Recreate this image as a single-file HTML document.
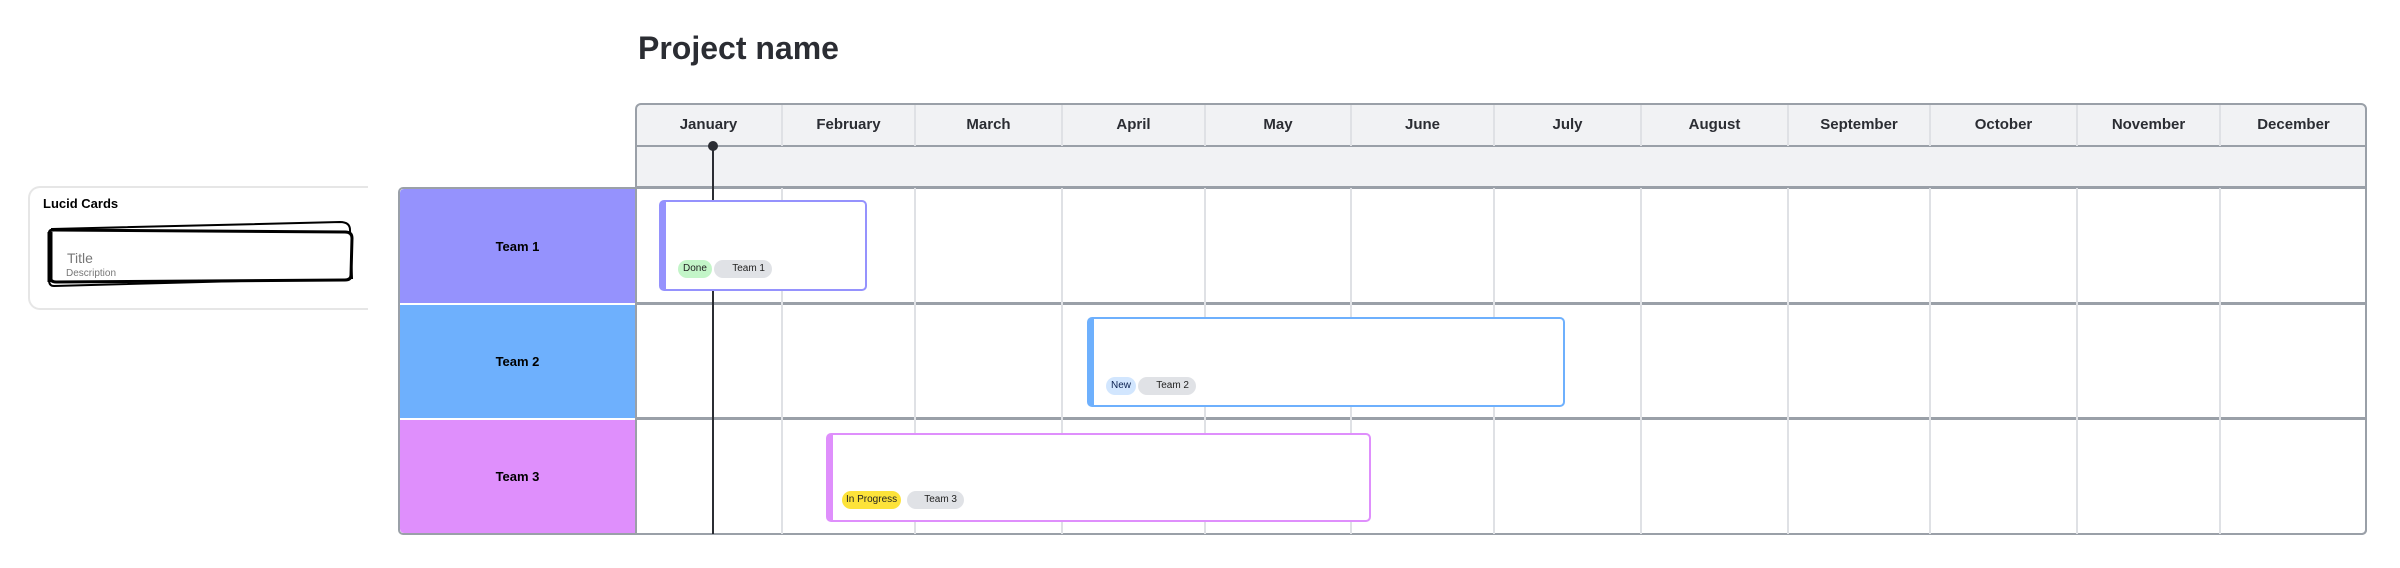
<!DOCTYPE html>
<html><head><meta charset="utf-8"><style>
*{box-sizing:border-box;margin:0;padding:0}
body{width:2400px;height:568px;background:#fff;position:relative;overflow:hidden;font-family:"Liberation Sans",sans-serif}
.a{position:absolute}
.mon{position:absolute;top:103px;height:43px;display:flex;align-items:center;justify-content:center;font-weight:bold;font-size:15px;color:#2b2d33}
.vl{position:absolute;width:2px;background:#dfe1e5;top:146px;height:388px}
.hl{position:absolute;left:635px;width:1732px;height:3px;background:#9aa0a8}
.team{position:absolute;left:398px;width:237px;display:flex;align-items:center;justify-content:center;font-weight:bold;font-size:13px;color:#000}
.card{position:absolute;background:#fff;border:2px solid;border-left-width:7px;border-radius:5px}
.pill{position:absolute;height:18px;border-radius:9px;font-size:10px;line-height:18px;color:#222;padding:0 7px}
</style></head><body>
<div class="a" style="left:638px;top:30px;font-size:32px;font-weight:bold;color:#2b2d33">Project name</div>

<!-- Lucid panel -->
<div class="a" style="left:28px;top:186px;width:340px;height:124px;border:2px solid #e6e6e6;border-right:none;border-radius:12px 0 0 12px;background:#fff"></div>
<div class="a" style="left:43px;top:196px;font-size:13px;font-weight:bold;color:#000">Lucid Cards</div>
<svg class="a" style="left:40px;top:220px" width="320" height="80" viewBox="0 0 320 80">
<path d="M12 9 L300 2 Q310 2 310 10 L312 58 L14 66 Q9 66 9 60 Z" fill="none" stroke="#000" stroke-width="2"/>
<path d="M10 14 Q8 10 14 10 L305 12 Q312 12 312 18 L311 55 Q311 60 305 60 L16 62 Q10 62 10 56 Z" fill="#fff" stroke="#000" stroke-width="3"/>
<path d="M10 12 L10 62" stroke="#000" stroke-width="5"/>
</svg>
<div class="a" style="left:67px;top:250px;font-size:14px;color:#777">Title</div>
<div class="a" style="left:66px;top:268px;font-size:10px;color:#777">Description</div>

<!-- grid -->
<div class="a" style="left:635px;top:103px;width:1732px;height:84px;background:#f1f2f4;border-radius:6px 6px 0 0"></div>
<div class="a" style="left:398px;top:187px;width:1969px;height:348px;border:2px solid #9aa0a8;border-radius:5px 0 5px 5px"></div>
<div class="a" style="left:635px;top:103px;width:1732px;height:432px;border:2px solid #9aa0a8;border-radius:6px 6px 5px 0"></div>
<div class="team" style="top:189px;height:114px;background:#9592fd;border-radius:4px 0 0 0;left:400px;width:235px">Team 1</div>
<div class="team" style="top:305px;height:113px;background:#6eb0fd;left:400px;width:235px">Team 2</div>
<div class="team" style="top:420px;height:113px;background:#df8ffc;border-radius:0 0 0 4px;left:400px;width:235px">Team 3</div>
<div class="a" style="left:635px;top:145px;width:1732px;height:2px;background:#9aa0a8"></div>
<div class="a" style="left:635px;top:186px;width:1732px;height:2px;background:#9aa0a8"></div>
<div class="hl" style="top:302px"></div>
<div class="hl" style="top:417px"></div>
<div class="a" style="left:635px;top:187px;width:2px;height:348px;background:#9aa0a8"></div>

<div class="vl" style="left:781px;top:105px;height:41px"></div><div class="vl" style="left:781px;top:188px;height:346px"></div>
<div class="vl" style="left:914px;top:105px;height:41px"></div><div class="vl" style="left:914px;top:188px;height:346px"></div>
<div class="vl" style="left:1061px;top:105px;height:41px"></div><div class="vl" style="left:1061px;top:188px;height:346px"></div>
<div class="vl" style="left:1204px;top:105px;height:41px"></div><div class="vl" style="left:1204px;top:188px;height:346px"></div>
<div class="vl" style="left:1350px;top:105px;height:41px"></div><div class="vl" style="left:1350px;top:188px;height:346px"></div>
<div class="vl" style="left:1493px;top:105px;height:41px"></div><div class="vl" style="left:1493px;top:188px;height:346px"></div>
<div class="vl" style="left:1640px;top:105px;height:41px"></div><div class="vl" style="left:1640px;top:188px;height:346px"></div>
<div class="vl" style="left:1787px;top:105px;height:41px"></div><div class="vl" style="left:1787px;top:188px;height:346px"></div>
<div class="vl" style="left:1929px;top:105px;height:41px"></div><div class="vl" style="left:1929px;top:188px;height:346px"></div>
<div class="vl" style="left:2076px;top:105px;height:41px"></div><div class="vl" style="left:2076px;top:188px;height:346px"></div>
<div class="vl" style="left:2219px;top:105px;height:41px"></div><div class="vl" style="left:2219px;top:188px;height:346px"></div>

<div class="mon" style="left:635px;width:147px">January</div>
<div class="mon" style="left:782px;width:133px">February</div>
<div class="mon" style="left:915px;width:147px">March</div>
<div class="mon" style="left:1062px;width:143px">April</div>
<div class="mon" style="left:1205px;width:146px">May</div>
<div class="mon" style="left:1351px;width:143px">June</div>
<div class="mon" style="left:1494px;width:147px">July</div>
<div class="mon" style="left:1641px;width:147px">August</div>
<div class="mon" style="left:1788px;width:142px">September</div>
<div class="mon" style="left:1930px;width:147px">October</div>
<div class="mon" style="left:2077px;width:143px">November</div>
<div class="mon" style="left:2220px;width:147px">December</div>

<!-- timeline -->
<div class="a" style="left:712px;top:146px;width:2px;height:388px;background:#2b2d33"></div>
<div class="a" style="left:708px;top:141px;width:10px;height:10px;border-radius:50%;background:#2b2d33"></div>

<!-- cards -->
<div class="card" style="left:659px;top:200px;width:208px;height:91px;border-color:#9592fd"></div>
<div class="pill" style="left:678px;top:260px;background:#c3f5c8;padding:0 5px">Done</div>
<div class="pill" style="left:714px;top:260px;width:58px;background:#e0e2e6;text-align:right">Team 1</div>

<div class="card" style="left:1087px;top:317px;width:478px;height:90px;border-color:#6eb0fd"></div>
<div class="pill" style="left:1106px;top:377px;background:#d2e6fe;color:#0a2050;padding:0 5px">New</div>
<div class="pill" style="left:1138px;top:377px;width:58px;background:#e0e2e6;text-align:right">Team 2</div>

<div class="card" style="left:826px;top:433px;width:545px;height:89px;border-color:#df8ffc"></div>
<div class="pill" style="left:842px;top:491px;background:#fde33a;padding:0 4px">In Progress</div>
<div class="pill" style="left:907px;top:491px;width:57px;background:#e0e2e6;text-align:right">Team 3</div>
</body></html>
